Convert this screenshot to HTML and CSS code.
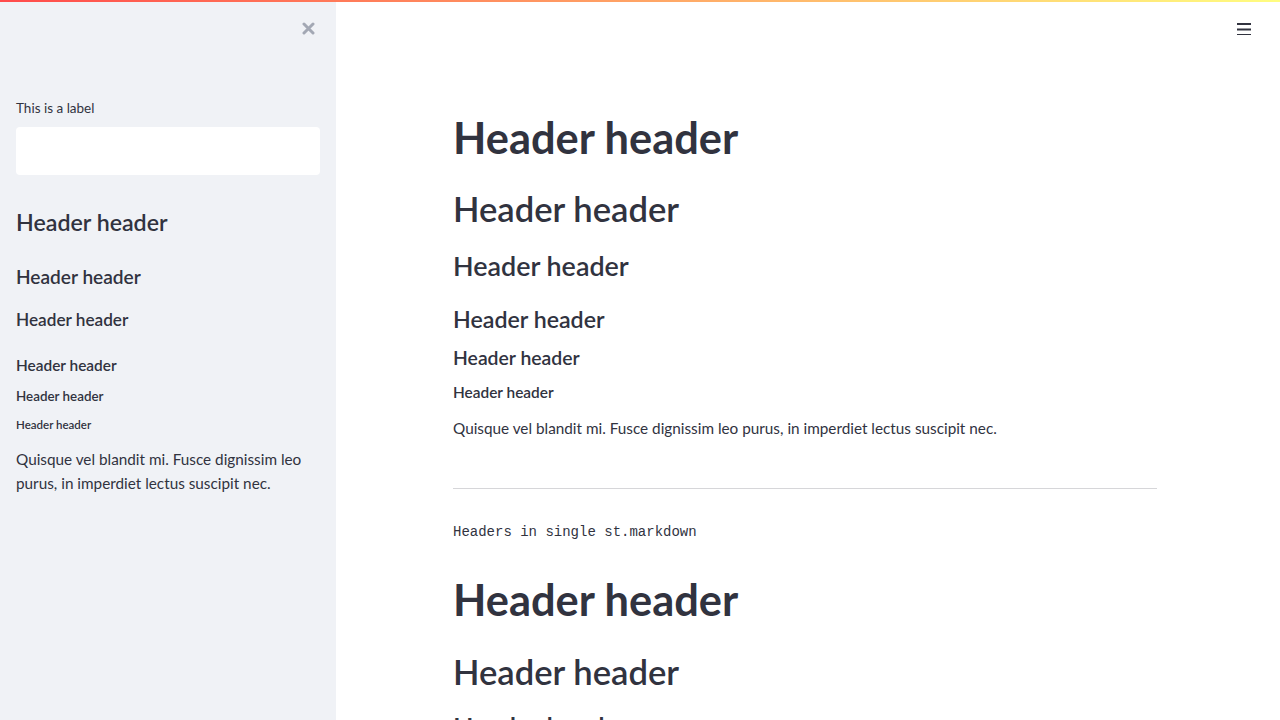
FILE: index.html
```html
<!DOCTYPE html>
<html>
<head>
<meta charset="utf-8">
<link rel="stylesheet" href="styles.css">
</head>
<body>
<div class="decoration"></div>
<div class="app">
  <aside class="sidebar">
    <div class="sb-top">
      <button class="close-btn" aria-label="Close sidebar">
        <svg width="13" height="13" viewBox="0 0 13 13"><path d="M2 2 L11 11 M11 2 L2 11" stroke="#a3a8b4" stroke-width="3" stroke-linecap="round"/></svg>
      </button>
    </div>
    <label class="sb-label">This is a label</label>
    <div class="sb-input"></div>
    <h1 class="sb-h1">Header header</h1>
    <h2 class="sb-h2">Header header</h2>
    <h3 class="sb-h3">Header header</h3>
    <h4 class="sb-h4">Header header</h4>
    <h5 class="sb-h5">Header header</h5>
    <h6 class="sb-h6">Header header</h6>
    <p class="sb-p">Quisque vel blandit mi. Fusce dignissim leo purus, in imperdiet lectus suscipit nec.</p>
  </aside>
  <main class="main">
    <header class="topbar">
      <button class="menu-btn" aria-label="Menu">
        <svg width="14" height="13" viewBox="0 0 14 13"><rect x="0" y="1" width="14" height="2" fill="#31333f"/><rect x="0" y="6.5" width="14" height="2" fill="#31333f"/><rect x="0" y="12" width="14" height="2" fill="#31333f"/></svg>
      </button>
    </header>
    <div class="content">
      <h1 class="m-h1">Header header</h1>
      <h2 class="m-h2">Header header</h2>
      <h3 class="m-h3">Header header</h3>
      <h4 class="m-h4">Header header</h4>
      <h5 class="m-h5">Header header</h5>
      <h6 class="m-h6">Header header</h6>
      <p class="m-p">Quisque vel blandit mi. Fusce dignissim leo purus, in imperdiet lectus suscipit nec.</p>
      <hr class="m-hr">
      <div class="m-code">Headers in single st.markdown</div>
      <h1 class="m-h1b">Header header</h1>
      <h2 class="m-h2b">Header header</h2>
      <h3 class="m-h3b">Header header</h3>
    </div>
  </main>
</div>
</body>
</html>
```
FILE: styles.css
```css
* { box-sizing: border-box; }
html, body { margin: 0; padding: 0; height: 720px; overflow: hidden; }
body {
  font-family: Lato, "Noto Sans", sans-serif;
  color: rgb(49, 51, 63);
  background: #fff;
}
h1, h2, h3, h4, h5, h6, p { margin: 0; padding: 0; }
.decoration {
  position: absolute; top: 0; left: 0; right: 0; height: 2px; z-index: 5;
  background: linear-gradient(90deg, rgb(255, 75, 75), rgb(255, 253, 128));
}
.app { display: flex; height: 720px; }
.sidebar {
  width: 336px; flex: none; background: #f0f2f6;
  padding: 0 16px; display: flex; flex-direction: column;
}
.sb-top { height: 56px; display: flex; justify-content: flex-end; align-items: center; padding-right: 5px; flex: none; }
.close-btn, .menu-btn { border: 0; background: none; padding: 0; display: flex; cursor: pointer; }
.sb-label { font-size: 13.5px; line-height: 20px; margin-top: 42px; }
.sb-input { height: 48px; background: #fff; border-radius: 4px; margin-top: 9px; flex: none; }
.sb-h1 { font-size: 23.2px; line-height: 32px; font-weight: 600; margin-top: 31px; }
.sb-h2 { font-size: 19.1px; line-height: 28px; font-weight: 600; margin-top: 25px; }
.sb-h3 { font-size: 17.2px; line-height: 24px; font-weight: 600; margin-top: 17px; }
.sb-h4 { font-size: 15.4px; line-height: 22px; font-weight: 600; margin-top: 22px; }
.sb-h5 { font-size: 13.4px; line-height: 20px; font-weight: 600; margin-top: 10px; }
.sb-h6 { font-size: 11.5px; line-height: 18px; font-weight: 600; margin-top: 10px; }
.sb-p { font-size: 15.3px; line-height: 24px; margin-top: 13px; }

.main { flex: 1; display: flex; flex-direction: column; }
.topbar { height: 56px; display: flex; justify-content: flex-end; align-items: center; padding-right: 29px; flex: none; }
.content { width: 704px; margin-left: 117px; display: flex; flex-direction: column; }
.m-h1, .m-h1b { font-size: 43.4px; line-height: 52px; font-weight: 700; }
.m-h2, .m-h2b { font-size: 34.6px; line-height: 44px; font-weight: 600; }
.m-h3, .m-h3b { font-size: 26.9px; line-height: 36px; font-weight: 600; }
.m-h4 { font-size: 23.2px; line-height: 32px; font-weight: 600; }
.m-h5 { font-size: 19.4px; line-height: 28px; font-weight: 600; }
.m-h6 { font-size: 15.4px; line-height: 22px; font-weight: 600; }
.m-p { font-size: 15.3px; line-height: 24px; }
.m-h1 { margin-top: 55px; }
.m-h2 { margin-top: 24px; }
.m-h3 { margin-top: 17px; }
.m-h4 { margin-top: 19px; }
.m-h5 { margin-top: 9px; }
.m-h6 { margin-top: 9px; }
.m-p { margin-top: 13px; }
.m-hr { margin: 48px 0 0; border: 0; height: 1px; background: rgba(49, 51, 63, 0.2); flex: none; box-shadow: 0 4px 8px rgba(0, 0, 0, 0.015); }
.m-code { font-family: "Liberation Mono", "DejaVu Sans Mono", monospace; font-size: 14px; line-height: 20px; margin-top: 33px; }
.m-h1b { margin-top: 31px; }
.m-h2b { margin-top: 25px; }
.m-h3b { margin-top: 15px; }
```
